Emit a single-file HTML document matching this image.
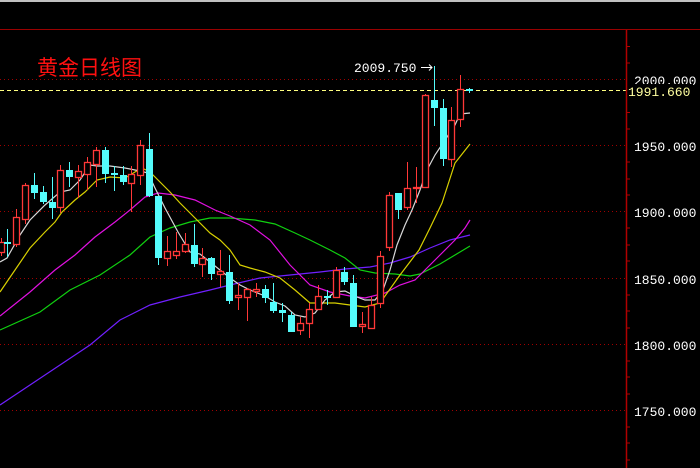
<!DOCTYPE html>
<html><head><meta charset="utf-8"><style>
html,body{margin:0;padding:0;background:#000;width:700px;height:468px;overflow:hidden}
svg{display:block}
.lb{font-family:"Liberation Mono",monospace;font-size:13px;fill:#fff}
</style></head><body>
<svg width="700" height="468" viewBox="0 0 700 468" xmlns="http://www.w3.org/2000/svg">
<rect width="700" height="468" fill="#000"/>
<rect width="700" height="2" fill="#c0c0c0"/>
<line x1="0" y1="29.5" x2="700" y2="29.5" stroke="#9a0000" stroke-width="1"/>
<g stroke="#a00000" stroke-width="1" stroke-dasharray="1,3">
<line x1="0" y1="79.5" x2="626" y2="79.5"/>
<line x1="0" y1="145.5" x2="626" y2="145.5"/>
<line x1="0" y1="211.5" x2="626" y2="211.5"/>
<line x1="0" y1="278.5" x2="626" y2="278.5"/>
<line x1="0" y1="344.5" x2="626" y2="344.5"/>
<line x1="0" y1="410.5" x2="626" y2="410.5"/>
</g>
<line x1="0" y1="90.5" x2="626" y2="90.5" stroke="#ffff80" stroke-width="1" stroke-dasharray="4,3"/>
<line x1="626.5" y1="30" x2="626.5" y2="468" stroke="#b00000" stroke-width="1.5"/>
<path stroke="#b00000" stroke-width="1" d="M626 46.5h4M626 63h4M626 112.5h4M626 129h4M626 162h4M626 179h4M626 195h4M626 228h4M626 245h4M626 261h4M626 295h4M626 311h4M626 328h4M626 361h4M626 377h4M626 394h4M626 427h4M626 443h4M626 460h4"/>
<text x="634" y="85" class="lb">2000.000</text>
<rect x="629" y="84" width="64" height="14" fill="#000"/>
<text x="628" y="96" class="lb" style="fill:#ffffa0">1991.660</text>
<text x="634" y="151" class="lb">1950.000</text>
<text x="634" y="217" class="lb">1900.000</text>
<text x="634" y="284" class="lb">1850.000</text>
<text x="634" y="350" class="lb">1800.000</text>
<text x="634" y="416" class="lb">1750.000</text>
<text x="37" y="75" font-family="'Noto Sans CJK SC',sans-serif" font-size="21" fill="#ff1010">黄金日线图</text>
<text x="354" y="72" class="lb">2009.750</text>
<path d="M421 67.5h11M429 64.5l3 3-3 3" stroke="#fff" fill="none" stroke-width="1"/>
<g fill="none" stroke-width="1.2">
<polyline stroke="#7020ff" points="0,405 30,385 60,365 90,345 120,320 150,305 180,297 210,290 230,285 260,278 290,275 320,272 345,269 370,267 390,263 410,257 430,248 450,240 470,235"/>
<polyline stroke="#10d010" points="0,330 40,312 70,290 100,275 130,255 150,237 170,228 190,222 210,218 230,218 255,220 275,224 295,233 310,240 330,250 345,258 360,270 375,273 395,274 410,276 420,274 440,264 460,252 470,246"/>
<polyline stroke="#e010e0" points="0,316 30,292 55,270 75,255 95,237 115,222 130,210 145,197 158,193 175,195 195,200 215,210 230,216 250,225 270,240 290,265 310,285 330,292 350,296 365,298 385,293 400,285 415,280 425,270 440,255 455,240 465,228 470,220"/>
<polyline stroke="#d8d000" points="0,292 15,270 30,248 45,232 55,222 62,212 75,200 85,192 97,180 110,177 125,178 135,172 142,168 150,172 158,180 170,192 180,203 195,218 210,233 220,240 230,250 240,265 250,268 265,272 280,278 295,290 310,303 320,303 335,303 350,305 365,307 380,303 400,275 419,250 430,228 442,203 455,163 470,144"/>
<polyline stroke="#d8d8d8" points="0,262 7,258 20,235 30,220 45,205 60,192 70,190 80,180 90,165 97,166 110,166 125,168 140,171 148,173 155,188 165,208 178,232 190,252 200,254 210,262 220,270 230,278 240,285 250,290 265,296 275,302 285,306 295,315 305,317 315,313 325,300 335,292 345,291 357,297 365,300 375,300 383,290 390,270 397,245 405,225 412,210 420,190 427,170 435,155 445,140 455,125 460,114 470,113"/>
</g>
<path fill="none" stroke="#ff3838" stroke-width="1" d="M1.5 238V256M16.5 209V247M25.5 183V224M60.5 165V213M78.5 165V198M87.5 157V190M96.5 147V187M131.5 166V212M140.5 140V185M167.5 236V266M176.5 232V259M185.5 233V253M202.5 248V277M220.5 250V287M238.5 283V310M247.5 288V321M256.5 283V297M300.5 317V335M309.5 303V338M318.5 285V310M336.5 267V297M362.5 312V333M371.5 297V328M380.5 251V308M389.5 192V251M407.5 162V210M416.5 167V203M425.5 94V188M451.5 107V167M460.5 75V127"/>
<path fill="none" stroke="#54fcfc" stroke-width="1" d="M7.5 229V257M34.5 173V199M43.5 186V204M52.5 177V219M69.5 162V187M105.5 147V183M114.5 166V191M123.5 166V185M149.5 133V197M158.5 196V265M194.5 224V267M211.5 257V280M229.5 255V304M265.5 285V303M273.5 283V313M282.5 303V322M291.5 312V332M327.5 290V305M344.5 267V285M353.5 275V327M398.5 193V219M434.5 66V126M443.5 99V166M469.5 88V93"/>
<g fill="#000" stroke="#ff3838" stroke-width="1.3">
<rect x="-1.5" y="242.5" width="6" height="10"/><rect x="13.5" y="217.5" width="6" height="27"/><rect x="22.5" y="185.5" width="6" height="34"/><rect x="57.5" y="170.5" width="6" height="37"/><rect x="75.5" y="171.5" width="6" height="6"/><rect x="84.5" y="162.5" width="6" height="12"/><rect x="93.5" y="150.5" width="6" height="14"/><rect x="128.5" y="174.5" width="6" height="9"/><rect x="137.5" y="145.5" width="6" height="30"/><rect x="164.5" y="251.5" width="6" height="7"/><rect x="173.5" y="251.5" width="6" height="4"/><rect x="182.5" y="244.5" width="6" height="7"/><rect x="199.5" y="258.5" width="6" height="6"/><rect x="217.5" y="271.5" width="6" height="3"/><rect x="235.5" y="295.5" width="6" height="2"/><rect x="244.5" y="289.5" width="6" height="8"/><rect x="253.5" y="289.5" width="6" height="2"/><rect x="297.5" y="323.5" width="6" height="7"/><rect x="306.5" y="309.5" width="6" height="14"/><rect x="315.5" y="296.5" width="6" height="13"/><rect x="333.5" y="270.5" width="6" height="27"/><rect x="359.5" y="324.5" width="6" height="2"/><rect x="368.5" y="305.5" width="6" height="23"/><rect x="377.5" y="256.5" width="6" height="47"/><rect x="386.5" y="195.5" width="6" height="52"/><rect x="404.5" y="188.5" width="6" height="19"/><rect x="413.5" y="187.5" width="6" height="1"/><rect x="422.5" y="95.5" width="6" height="92"/><rect x="448.5" y="120.5" width="6" height="39"/><rect x="457.5" y="89.5" width="6" height="30"/>
</g>
<g fill="#54fcfc">
<rect x="4" y="242" width="7" height="2"/><rect x="31" y="185" width="7" height="8"/><rect x="40" y="192" width="7" height="10"/><rect x="49" y="202" width="7" height="6"/><rect x="66" y="170" width="7" height="7"/><rect x="102" y="150" width="7" height="24"/><rect x="111" y="173" width="7" height="2"/><rect x="120" y="175" width="7" height="7"/><rect x="146" y="149" width="7" height="47"/><rect x="155" y="196" width="7" height="62"/><rect x="191" y="245" width="7" height="19"/><rect x="208" y="258" width="7" height="16"/><rect x="226" y="272" width="7" height="29"/><rect x="262" y="289" width="7" height="9"/><rect x="270" y="302" width="7" height="9"/><rect x="279" y="310" width="7" height="3"/><rect x="288" y="315" width="7" height="17"/><rect x="324" y="296" width="7" height="2"/><rect x="341" y="272" width="7" height="10"/><rect x="350" y="283" width="7" height="44"/><rect x="395" y="193" width="7" height="17"/><rect x="431" y="100" width="7" height="8"/><rect x="440" y="108" width="7" height="51"/><rect x="466" y="89" width="7" height="2"/>
</g>
</svg>
</body></html>
